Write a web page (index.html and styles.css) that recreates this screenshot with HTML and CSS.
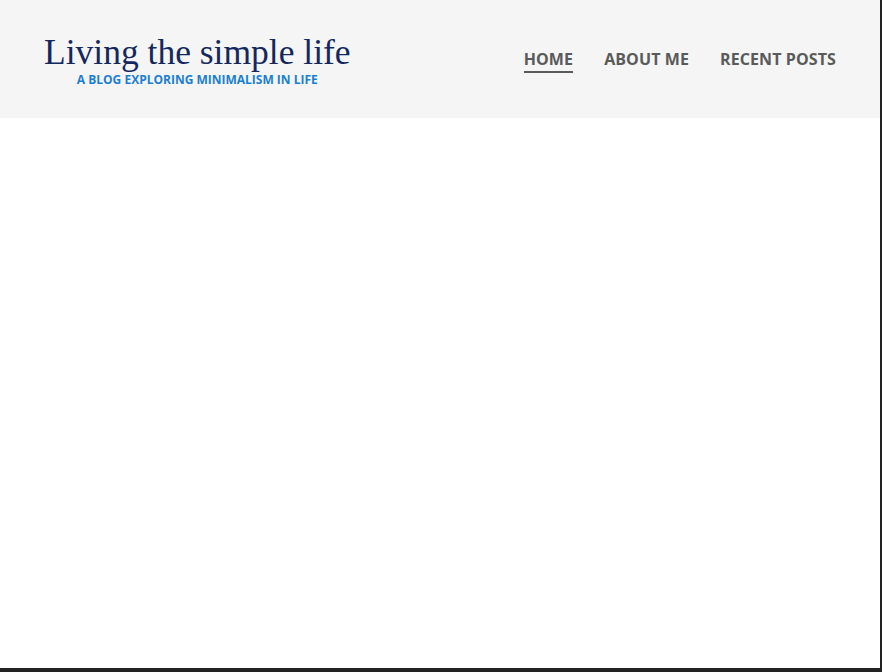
FILE: index.html
```html
<!DOCTYPE html>
<html lang="en">
<head>
<meta charset="utf-8">
<title>Living the simple life</title>
<link rel="stylesheet" href="styles.css">
</head>
<body>
<div class="frame">
  <header class="site-header">
    <div class="brand">
      <h1 class="site-title">Living the simple life</h1>
      <p class="site-tagline">A blog exploring minimalism in life</p>
    </div>
    <nav class="site-nav">
      <a class="nav-link active" href="#">Home</a>
      <a class="nav-link" href="#">About me</a>
      <a class="nav-link" href="#">Recent posts</a>
    </nav>
  </header>
  <main class="content"></main>
</div>
</body>
</html>
```

FILE: styles.css
```css
html, body {
  margin: 0;
  padding: 0;
  background: #222222;
}
.frame {
  width: 880px;
  height: 668px;
  background: #ffffff;
  display: flex;
  flex-direction: column;
}
.site-header {
  height: 118px;
  background: #f5f5f5;
  display: flex;
  justify-content: space-between;
  align-items: flex-start;
  padding: 0 44px 0 44px;
  box-sizing: border-box;
}
.brand {
  padding-top: 33px;
  display: flex;
  flex-direction: column;
  align-items: center;
}
.site-title {
  margin: 0;
  font-family: "Liberation Serif", serif;
  font-weight: 400;
  font-size: 35.5px;
  line-height: 38px;
  color: #14285f;
}
.site-tagline {
  margin: 0;
  font-family: "Open Sans", sans-serif;
  font-weight: 700;
  font-size: 12px;
  line-height: 17px;
  text-transform: uppercase;
  color: #1b7fd1;
}
.site-nav {
  display: flex;
  gap: 31px;
  padding-top: 49px;
}
.nav-link {
  font-family: "Open Sans", sans-serif;
  font-weight: 700;
  font-size: 16px;
  line-height: 20px;
  letter-spacing: 0.1px;
  text-transform: uppercase;
  text-decoration: none;
  color: #5a5a5a;
  padding-bottom: 2px;
  border-bottom: 2px solid transparent;
}
.nav-link.active {
  border-bottom-color: #5a5a5a;
}
.content {
  flex: 1;
}
```
